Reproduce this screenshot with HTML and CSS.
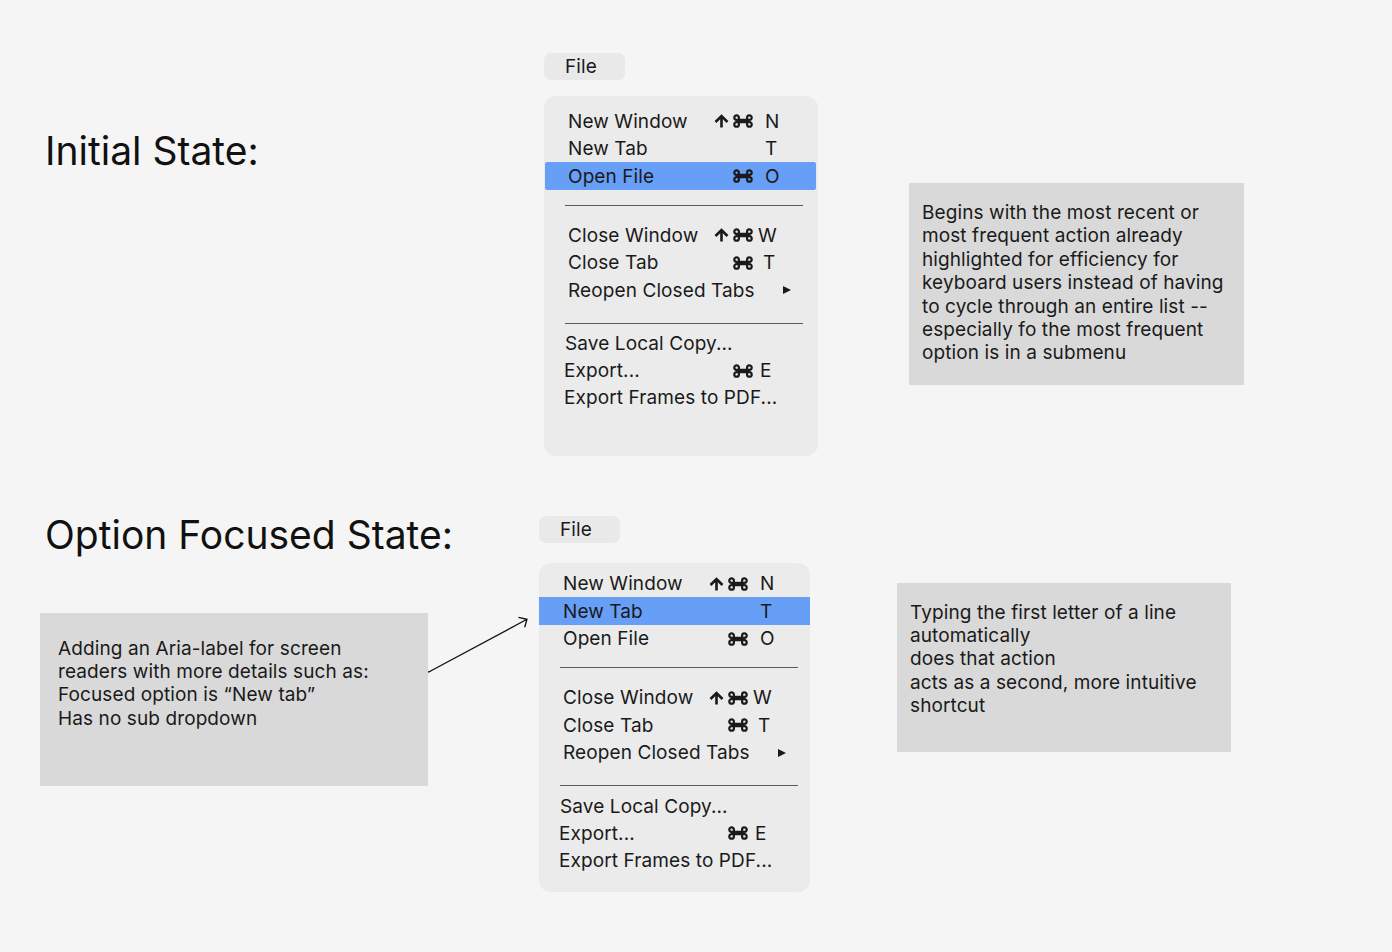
FILE: index.html
```html
<!DOCTYPE html>
<html lang="en">
<head>
    <meta charset="UTF-8">
    <meta name="viewport" content="width=device-width, initial-scale=1.0">
    <title>File Menu - Keyboard States</title>
    <link rel="stylesheet" href="styles.css">
</head>
<body>
    <div class="board">
        <!-- Initial state -->
        <section class="state state--initial">
            <div class="state-side">
                <h1 class="state-title">Initial State:</h1>
            </div>

            <div class="menu-col">
                <div class="file-btn">File</div>
                <div class="menu">
                    <div class="group">
                        <div class="item">
                            <span class="label">New Window</span>
                            <span class="mods">
                                <svg class="ico-shift" viewBox="0 0 15 14"><path d="M7.5 13.5V2M1.5 8L7.5 2L13.5 8"/></svg>
                                <svg class="ico-cmd" viewBox="0 0 20 14"><path d="M5.9 5.9V3.6A2.3 2.3 0 1 0 3.6 5.9H16.4A2.3 2.3 0 1 0 14.1 3.6V10.4A2.3 2.3 0 1 0 16.4 8.1H3.6A2.3 2.3 0 1 0 5.9 10.4Z"/></svg>
                            </span>
                            <span class="key">N</span>
                        </div>
                        <div class="item">
                            <span class="label">New Tab</span>
                            <span class="mods"></span>
                            <span class="key">T</span>
                        </div>
                        <div class="item item--active">
                            <span class="label">Open File</span>
                            <span class="mods">
                                <svg class="ico-cmd" viewBox="0 0 20 14"><path d="M5.9 5.9V3.6A2.3 2.3 0 1 0 3.6 5.9H16.4A2.3 2.3 0 1 0 14.1 3.6V10.4A2.3 2.3 0 1 0 16.4 8.1H3.6A2.3 2.3 0 1 0 5.9 10.4Z"/></svg>
                            </span>
                            <span class="key">O</span>
                        </div>
                    </div>
                    <hr class="sep sep--first">
                    <div class="group">
                        <div class="item">
                            <span class="label">Close Window</span>
                            <span class="mods">
                                <svg class="ico-shift" viewBox="0 0 15 14"><path d="M7.5 13.5V2M1.5 8L7.5 2L13.5 8"/></svg>
                                <svg class="ico-cmd" viewBox="0 0 20 14"><path d="M5.9 5.9V3.6A2.3 2.3 0 1 0 3.6 5.9H16.4A2.3 2.3 0 1 0 14.1 3.6V10.4A2.3 2.3 0 1 0 16.4 8.1H3.6A2.3 2.3 0 1 0 5.9 10.4Z"/></svg>
                            </span>
                            <span class="key key--w">W</span>
                        </div>
                        <div class="item">
                            <span class="label">Close Tab</span>
                            <span class="mods">
                                <svg class="ico-cmd" viewBox="0 0 20 14"><path d="M5.9 5.9V3.6A2.3 2.3 0 1 0 3.6 5.9H16.4A2.3 2.3 0 1 0 14.1 3.6V10.4A2.3 2.3 0 1 0 16.4 8.1H3.6A2.3 2.3 0 1 0 5.9 10.4Z"/></svg>
                            </span>
                            <span class="key key--t">T</span>
                        </div>
                        <div class="item">
                            <span class="label">Reopen Closed Tabs</span>
                            <span class="submenu"></span>
                        </div>
                    </div>
                    <hr class="sep sep--second">
                    <div class="group group--files">
                        <div class="item">
                            <span class="label label--save">Save Local Copy...</span>
                        </div>
                        <div class="item">
                            <span class="label">Export...</span>
                            <span class="mods">
                                <svg class="ico-cmd" viewBox="0 0 20 14"><path d="M5.9 5.9V3.6A2.3 2.3 0 1 0 3.6 5.9H16.4A2.3 2.3 0 1 0 14.1 3.6V10.4A2.3 2.3 0 1 0 16.4 8.1H3.6A2.3 2.3 0 1 0 5.9 10.4Z"/></svg>
                            </span>
                            <span class="key key--e">E</span>
                        </div>
                        <div class="item">
                            <span class="label">Export Frames to PDF...</span>
                        </div>
                    </div>
                </div>
            </div>

            <div class="note note--initial">
                Begins with the most recent or<br>
                most frequent action already<br>
                highlighted for efficiency for<br>
                keyboard users instead of having<br>
                to cycle through an entire list --<br>
                especially fo the most frequent<br>
                option is in a submenu
            </div>
        </section>

        <!-- Option focused state -->
        <section class="state state--focused">
            <div class="state-side">
                <h1 class="state-title">Option Focused State:</h1>
                <div class="note note--aria">
                    Adding an Aria-label for screen<br>
                    readers with more details such as:<br>
                    Focused option is “New tab”<br>
                    Has no sub dropdown
                </div>
            </div>

            <div class="menu-col">
                <div class="file-btn">File</div>
                <div class="menu">
                    <div class="group">
                        <div class="item">
                            <span class="label">New Window</span>
                            <span class="mods">
                                <svg class="ico-shift" viewBox="0 0 15 14"><path d="M7.5 13.5V2M1.5 8L7.5 2L13.5 8"/></svg>
                                <svg class="ico-cmd" viewBox="0 0 20 14"><path d="M5.9 5.9V3.6A2.3 2.3 0 1 0 3.6 5.9H16.4A2.3 2.3 0 1 0 14.1 3.6V10.4A2.3 2.3 0 1 0 16.4 8.1H3.6A2.3 2.3 0 1 0 5.9 10.4Z"/></svg>
                            </span>
                            <span class="key">N</span>
                        </div>
                        <div class="item item--active">
                            <span class="label">New Tab</span>
                            <span class="mods"></span>
                            <span class="key">T</span>
                        </div>
                        <div class="item">
                            <span class="label">Open File</span>
                            <span class="mods">
                                <svg class="ico-cmd" viewBox="0 0 20 14"><path d="M5.9 5.9V3.6A2.3 2.3 0 1 0 3.6 5.9H16.4A2.3 2.3 0 1 0 14.1 3.6V10.4A2.3 2.3 0 1 0 16.4 8.1H3.6A2.3 2.3 0 1 0 5.9 10.4Z"/></svg>
                            </span>
                            <span class="key">O</span>
                        </div>
                    </div>
                    <hr class="sep sep--first">
                    <div class="group">
                        <div class="item">
                            <span class="label">Close Window</span>
                            <span class="mods">
                                <svg class="ico-shift" viewBox="0 0 15 14"><path d="M7.5 13.5V2M1.5 8L7.5 2L13.5 8"/></svg>
                                <svg class="ico-cmd" viewBox="0 0 20 14"><path d="M5.9 5.9V3.6A2.3 2.3 0 1 0 3.6 5.9H16.4A2.3 2.3 0 1 0 14.1 3.6V10.4A2.3 2.3 0 1 0 16.4 8.1H3.6A2.3 2.3 0 1 0 5.9 10.4Z"/></svg>
                            </span>
                            <span class="key key--w">W</span>
                        </div>
                        <div class="item">
                            <span class="label">Close Tab</span>
                            <span class="mods">
                                <svg class="ico-cmd" viewBox="0 0 20 14"><path d="M5.9 5.9V3.6A2.3 2.3 0 1 0 3.6 5.9H16.4A2.3 2.3 0 1 0 14.1 3.6V10.4A2.3 2.3 0 1 0 16.4 8.1H3.6A2.3 2.3 0 1 0 5.9 10.4Z"/></svg>
                            </span>
                            <span class="key key--t">T</span>
                        </div>
                        <div class="item">
                            <span class="label">Reopen Closed Tabs</span>
                            <span class="submenu"></span>
                        </div>
                    </div>
                    <hr class="sep sep--second">
                    <div class="group group--files">
                        <div class="item">
                            <span class="label label--save">Save Local Copy...</span>
                        </div>
                        <div class="item">
                            <span class="label">Export...</span>
                            <span class="mods">
                                <svg class="ico-cmd" viewBox="0 0 20 14"><path d="M5.9 5.9V3.6A2.3 2.3 0 1 0 3.6 5.9H16.4A2.3 2.3 0 1 0 14.1 3.6V10.4A2.3 2.3 0 1 0 16.4 8.1H3.6A2.3 2.3 0 1 0 5.9 10.4Z"/></svg>
                            </span>
                            <span class="key key--e">E</span>
                        </div>
                        <div class="item">
                            <span class="label">Export Frames to PDF...</span>
                        </div>
                    </div>
                </div>
            </div>

            <div class="note note--typing">
                Typing the first letter of a line<br>
                automatically<br>
                does that action<br>
                acts as a second, more intuitive<br>
                shortcut
            </div>
        </section>

        <!-- connector from the aria note to the focused item -->
        <svg class="connector" viewBox="0 0 104 60">
            <path d="M2 57C3 57 4 56.5 6 55.2L101 4.3M92.4 2.3L101 4.3L98.7 12.3"/>
        </svg>
    </div>
</body>
</html>
```

FILE: styles.css
```css
* {
    margin: 0;
    padding: 0;
    box-sizing: border-box;
}

body {
    font-family: 'Inter', 'Noto Sans', sans-serif;
    background: #f5f5f5;
    color: #1a1a1a;
    font-size: 19px;
    letter-spacing: 0.1px;
}

.board {
    position: relative;
    width: 1392px;
    height: 952px;
    padding-top: 53px;
}

.state {
    display: flex;
    align-items: flex-start;
    padding-left: 40px;
}

.state--focused {
    margin-top: 55px;
}

.state-side {
    flex: none;
    width: 504px;
}

.state--focused .state-side {
    width: 499px;
}

.state-title {
    font-size: 39px;
    font-weight: 400;
    line-height: 48px;
    letter-spacing: 0;
    margin-left: 5px;
    color: #111;
}

.state--initial .state-title {
    margin-top: 74px;
}

/* menu column */
.menu-col {
    flex: none;
    width: 274px;
}

.state--focused .menu-col {
    width: 271px;
    margin-top: 5px;
}

.file-btn {
    width: 81px;
    height: 27px;
    line-height: 27px;
    padding-left: 21px;
    background: #e9e9e9;
    border-radius: 7px;
    margin-bottom: 16px;
}

.state--focused .file-btn {
    margin-bottom: 20px;
}

.menu {
    background: #ebebeb;
    border-radius: 12px;
    padding: 11.25px 0 44.5px;
}

.state--focused .menu {
    padding: 7.25px 0 18.5px;
}

.item {
    display: flex;
    align-items: center;
    height: 27.5px;
    padding-left: 24px;
    white-space: nowrap;
}

.group--files .item {
    height: 27px;
}

.item--active {
    background: #679ef6;
}

.state--initial .item--active {
    margin: 0 2px 0 1px;
    padding-left: 23px;
    border-radius: 2px;
}

.label {
    flex: none;
    width: 145px;
}

.group--files .label {
    margin-left: -4px;
    width: 149px;
}

.group--files .label--save {
    margin-left: -3px;
}

.mods {
    flex: none;
    width: 40px;
    display: flex;
    justify-content: flex-end;
    align-items: center;
    gap: 4px;
}

.ico-shift {
    width: 15px;
    height: 14px;
    fill: none;
    stroke: #1a1a1a;
    stroke-width: 2.6;
}

.ico-cmd {
    width: 20px;
    height: 14px;
    fill: none;
    stroke: #1a1a1a;
    stroke-width: 2.2;
}

.key {
    margin-left: 12px;
}

.key--w {
    margin-left: 5px;
}

.key--t {
    margin-left: 10px;
}

.key--e {
    margin-left: 7px;
}

.submenu {
    width: 0;
    height: 0;
    margin-left: 70px;
    border-left: 8px solid #1a1a1a;
    border-top: 4.5px solid transparent;
    border-bottom: 4.5px solid transparent;
}

.sep {
    border: none;
    border-top: 1px solid #5a5a5a;
    margin-left: 21px;
    margin-right: 15px;
}

.state--focused .sep {
    margin-right: 12px;
}

.sep--first {
    margin-top: 14.75px;
    margin-bottom: 15.75px;
}

.sep--second {
    margin-top: 18.75px;
    margin-bottom: 6.5px;
}

/* notes */
.note {
    flex: none;
    background: #d9d9d9;
    line-height: 23.4px;
    padding: 18px 13px 0;
    white-space: nowrap;
}

.note--initial {
    width: 335px;
    height: 202px;
    margin-top: 130px;
    margin-left: 91px;
}

.note--aria {
    width: 388px;
    height: 173px;
    margin-top: 54px;
    padding: 24px 18px 0;
}

.note--typing {
    width: 334px;
    height: 169px;
    margin-top: 72px;
    margin-left: 87px;
}

.connector {
    position: absolute;
    left: 426px;
    top: 615px;
    width: 104px;
    height: 60px;
    fill: none;
    stroke: #111;
    stroke-width: 1.3;
}
```
